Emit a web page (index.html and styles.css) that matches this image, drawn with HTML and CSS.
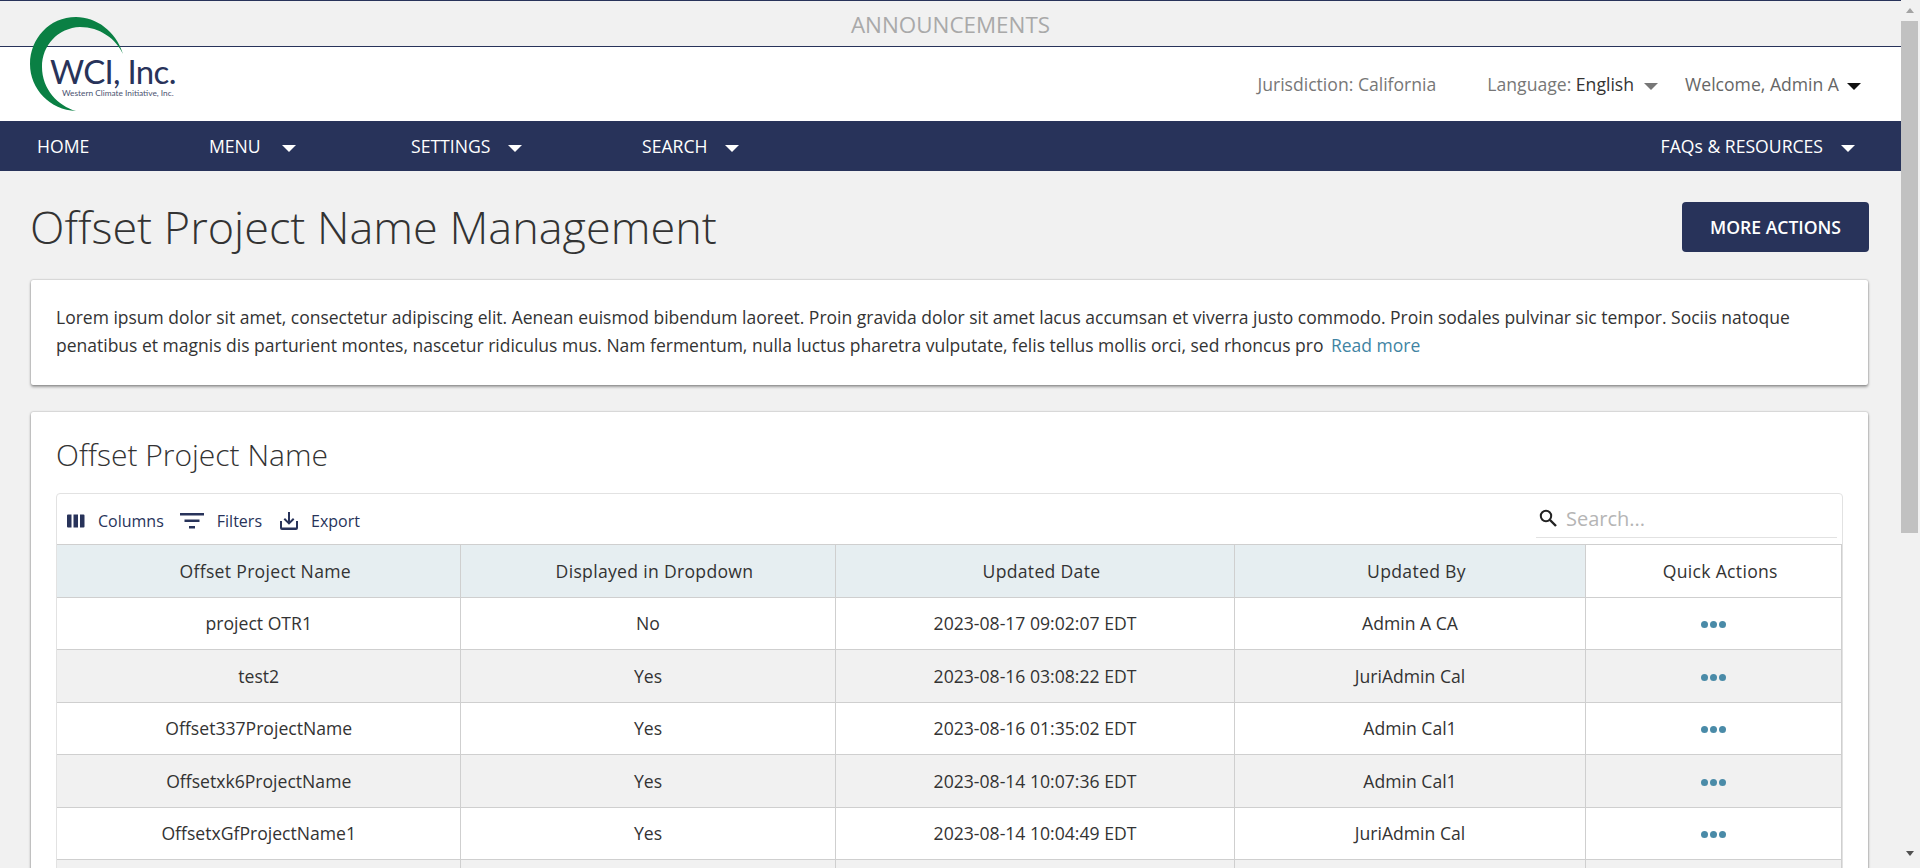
FILE: index.html
```html
<!DOCTYPE html>
<html lang="en">
<head>
  <meta charset="UTF-8">
  <title>Offset Project Name Management</title>
  <meta name="viewport" content="width=device-width, initial-scale=1.0">
  <link rel="stylesheet" href="styles.css">
</head>
<body>

  <div class="page">
    <div class="announce">ANNOUNCEMENTS</div>

    <svg class="logo" width="180" height="100" viewBox="0 0 180 100" aria-label="WCI, Inc.">
      <path fill="#0a8044" d="M93 37 C86 14 66 0 46 0 C19 0 0 22 0 47 C0 72 20 93 46 94 C28 89 12 72 12 50 C12 28 28 11 50 10 C70 10 86 22 93 37 Z"/>
      <text class="logo-name" x="20" y="67">WCI, Inc.</text>
      <text class="logo-sub" x="32" y="79">Western Climate Initiative, Inc.</text>
    </svg>

    <header class="topbar">
      <span class="top-item">Jurisdiction: California</span>
      <span class="top-item lang">Language: <b>English</b><i class="caret gray"></i></span>
      <span class="top-item welcome">Welcome, Admin A<i class="caret black"></i></span>
    </header>

    <nav class="nav">
      <a class="nav-home">HOME</a>
      <a class="nav-menu">MENU<i class="caret"></i></a>
      <a class="nav-settings">SETTINGS<i class="caret"></i></a>
      <a class="nav-search">SEARCH<i class="caret"></i></a>
      <a class="nav-faq">FAQs &amp; RESOURCES<i class="caret"></i></a>
    </nav>

    <main class="content">
      <div class="title-row">
        <h1>Offset Project Name Management</h1>
        <button class="more">MORE ACTIONS</button>
      </div>

      <section class="card intro">
        Lorem ipsum dolor sit amet, consectetur adipiscing elit. Aenean euismod bibendum laoreet. Proin gravida dolor sit amet lacus accumsan et viverra justo commodo. Proin sodales pulvinar sic tempor. Sociis natoque penatibus et magnis dis parturient montes, nascetur ridiculus mus. Nam fermentum, nulla luctus pharetra vulputate, felis tellus mollis orci, sed rhoncus pro <a class="read">Read more</a>
      </section>

      <section class="card list">
        <h2>Offset Project Name</h2>
        <div class="grid">
          <div class="toolbar">
            <span class="tool">
              <svg width="18" height="14" viewBox="0 0 18 14"><path fill="#28335a" d="M0 1.5 Q0 .5 1 .5 H4.5 V13.5 H1 Q0 13.5 0 12.5 Z M6.5 .5 H11 V13.5 H6.5 Z M13 .5 H16.5 Q17.5 .5 17.5 1.5 V12.5 Q17.5 13.5 16.5 13.5 H13 Z"/></svg>
              Columns
            </span>
            <span class="tool">
              <svg width="24" height="16" viewBox="0 0 24 16"><path fill="#28335a" d="M0 0 H24 V2.5 H0 Z M4.5 6.5 H19.5 V9 H4.5 Z M9 13 H15 V15.5 H9 Z"/></svg>
              Filters
            </span>
            <span class="tool">
              <svg width="18" height="18" viewBox="0 0 18 18"><path fill="#28335a" d="M8 0 H10 V9 L13 6 L14.4 7.4 L9 12.8 L3.6 7.4 L5 6 L8 9 Z M0 9 H2 V15.5 H16 V9 H18 V16 Q18 18 16 18 H2 Q0 18 0 16 Z"/></svg>
              Export
            </span>
            <div class="search">
              <svg width="18" height="18" viewBox="0 0 18 18"><circle cx="7" cy="7" r="5.2" fill="none" stroke="#222" stroke-width="2"/><path stroke="#222" stroke-width="2.4" d="M11 11 L17 17"/></svg>
              <span>Search...</span>
            </div>
          </div>

          <table>
            <colgroup>
              <col class="c1"><col class="c2"><col class="c3"><col class="c4"><col class="c5">
            </colgroup>
            <thead>
              <tr>
                <th>Offset Project Name</th>
                <th>Displayed in Dropdown</th>
                <th>Updated Date</th>
                <th>Updated By</th>
                <th class="quick">Quick Actions</th>
              </tr>
            </thead>
            <tbody>
              <tr><td>project OTR1</td><td>No</td><td>2023-08-17 09:02:07 EDT</td><td>Admin A CA</td><td class="quick"><span class="dots"><i></i><i></i><i></i></span></td></tr>
              <tr><td>test2</td><td>Yes</td><td>2023-08-16 03:08:22 EDT</td><td>JuriAdmin Cal</td><td class="quick"><span class="dots"><i></i><i></i><i></i></span></td></tr>
              <tr><td>Offset337ProjectName</td><td>Yes</td><td>2023-08-16 01:35:02 EDT</td><td>Admin Cal1</td><td class="quick"><span class="dots"><i></i><i></i><i></i></span></td></tr>
              <tr><td>Offsetxk6ProjectName</td><td>Yes</td><td>2023-08-14 10:07:36 EDT</td><td>Admin Cal1</td><td class="quick"><span class="dots"><i></i><i></i><i></i></span></td></tr>
              <tr><td>OffsetxGfProjectName1</td><td>Yes</td><td>2023-08-14 10:04:49 EDT</td><td>JuriAdmin Cal</td><td class="quick"><span class="dots"><i></i><i></i><i></i></span></td></tr>
              <tr><td>&nbsp;</td><td></td><td></td><td></td><td class="quick"></td></tr>
            </tbody>
          </table>
        </div>
      </section>
    </main>
  </div>

  <div class="scrollbar">
    <i class="arrow up"></i>
    <div class="thumb"></div>
    <i class="arrow down"></i>
  </div>

</body>
</html>
```

FILE: styles.css
```css
* {
  box-sizing: border-box;
}
html, body {
  height: 868px;
  overflow: hidden;
}
body {
  margin: 0;
  display: flex;
  background: #f1f1f1;
  font-family: "Open Sans", sans-serif;
  font-size: 17.6px;
  color: #333;
}
.page {
  position: relative;
  width: 1901px;
  height: 868px;
  overflow: hidden;
  flex: none;
  border-top: 1px solid #28335a;
}
.announce {
  height: 46px;
  border-bottom: 1px solid #28335a;
  text-align: center;
  font-size: 22.4px;
  line-height: 47px;
  color: #a9a9a9;
}
.logo {
  position: absolute;
  left: 30px;
  top: 16px;
}
.logo-name {
  font-family: "Lato", sans-serif;
  font-size: 33px;
  letter-spacing: -.7px;
  fill: #28335a;
}
.logo-sub {
  font-family: "Lato", sans-serif;
  font-size: 8.3px;
  fill: #4a5270;
}
.topbar {
  height: 74px;
  background: #fff;
  display: flex;
  justify-content: flex-end;
  align-items: center;
  padding-right: 40px;
  color: #777;
}
.top-item {
  margin-left: 51px;
}
.top-item b {
  font-weight: 400;
  color: #333;
}
.lang .caret {
  margin-left: 10px;
}
.welcome {
  margin-left: 27px;
  color: #666;
}
.welcome .caret {
  margin-left: 8px;
}
.caret {
  display: inline-block;
  width: 0;
  height: 0;
  vertical-align: middle;
  border-left: 7px solid transparent;
  border-right: 7px solid transparent;
  border-top: 7px solid #fff;
}
.caret.gray {
  border-top-color: #777;
}
.caret.black {
  border-top-color: #111;
}
.nav {
  height: 50px;
  background: #28335a;
  color: #fff;
  display: flex;
  align-items: center;
  padding: 0 46px 0 37px;
}
.nav .caret {
  margin-left: 18px;
}
.nav-home {
  width: 172px;
}
.nav-menu {
  width: 202px;
}
.nav-menu .caret {
  margin-left: 21px;
}
.nav-settings {
  width: 231px;
}
.nav-faq {
  margin-left: auto;
}
.content {
  padding: 0 32px 0 30px;
}
.title-row {
  height: 109px;
  display: flex;
  align-items: center;
  justify-content: space-between;
  padding-top: 2px;
}
h1 {
  margin: 0;
  font-size: 45px;
  font-weight: 300;
  color: #333;
}
.more {
  width: 187px;
  height: 50px;
  border: none;
  border-radius: 4px;
  background: #28335a;
  color: #fff;
  font: 600 17.6px "Open Sans", sans-serif;
}
.card {
  margin: 0 1px;
  background: #fff;
  border-radius: 2px;
  box-shadow: 0 2px 3px rgba(0, 0, 0, .35), 0 0 2px rgba(0, 0, 0, .35);
}
.intro {
  height: 105px;
  padding: 23px 25px 0;
  font-size: 17.5px;
  line-height: 28px;
}
.read {
  margin-left: 3px;
  color: #3f84a3;
}
.list {
  margin-top: 27px;
  height: 600px;
  padding: 24px 25px 0;
}
h2 {
  margin: 0 0 19px;
  font-size: 30px;
  line-height: 38px;
  font-weight: 300;
}
.grid {
  border: 1px solid #e2e2e2;
  border-radius: 4px 4px 0 0;
}
.toolbar {
  height: 50px;
  display: flex;
  align-items: center;
  padding: 4px 0 0 10px;
  font-size: 16px;
  color: #28335a;
}
.tool {
  display: flex;
  align-items: center;
  gap: 13px;
  margin-right: 18px;
}
.tool:first-child {
  margin-right: 16px;
}
.search {
  align-self: flex-start;
  margin-top: -4px;
  margin-left: auto;
  margin-right: 5px;
  width: 301px;
  height: 44px;
  display: flex;
  align-items: center;
  gap: 9px;
  padding: 5px 0 0 3px;
  border-bottom: 1px solid #e2e2e2;
  font-size: 20px;
  color: #b5b5b5;
}
table {
  width: 100%;
  table-layout: fixed;
  border-collapse: collapse;
}
.c1 { width: 403px; }
.c2 { width: 375px; }
.c3 { width: 399px; }
.c4 { width: 351px; }
th, td {
  height: 52.5px;
  padding: 0 0 0 1px;
  border: 1px solid #cfcfcf;
  text-align: center;
  font-size: 17.6px;
}
th {
  padding-left: 14px;
  font-weight: 500;
  letter-spacing: .3px;
  background: #e6eef1;
}
thead tr th:first-child, td:first-child {
  border-left: none;
}
tbody tr:nth-child(even) td {
  background: #f1f1f1;
}
th.quick {
  background: #fff;
}
.quick {
  border-left: 1px solid #bbb;
}
.dots {
  display: inline-flex;
  gap: 2px;
  margin-bottom: 2px;
  vertical-align: middle;
}
.dots i {
  width: 7px;
  height: 7px;
  border-radius: 50%;
  background: #4a8ba8;
}
.scrollbar {
  width: 17px;
  height: 868px;
  flex: none;
  background: #f1f1f1;
  display: flex;
  flex-direction: column;
  align-items: center;
}
.arrow {
  width: 0;
  height: 0;
  border-left: 4.5px solid transparent;
  border-right: 4.5px solid transparent;
}
.arrow.up {
  margin-top: 8px;
  border-bottom: 5px solid #a3a3a3;
}
.arrow.down {
  margin-top: 318px;
  border-top: 5px solid #505050;
}
.thumb {
  width: 17px;
  height: 512px;
  margin-top: 8px;
  background: #c1c1c1;
}
```
